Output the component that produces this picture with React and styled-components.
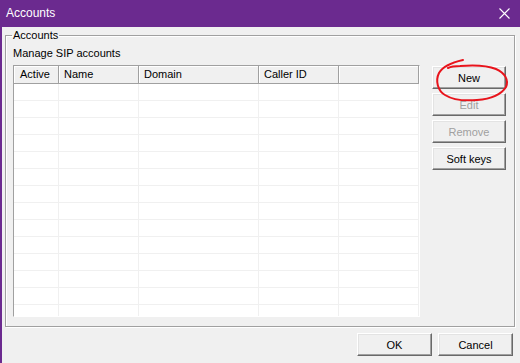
import React from "react";
import styled, { createGlobalStyle } from "styled-components";

const Global = createGlobalStyle`
  html, body { margin: 0; padding: 0; background: #f0f0f0; }
  body { font-family: "Liberation Sans", Arial, sans-serif; font-size: 11px; color: #000; }
`;

const Window = styled.div`
  width: 520px;
  height: 363px;
  box-sizing: border-box;
  border-left: 2px solid #6b2a8f;
  background: #f0f0f0;
  display: flex;
  flex-direction: column;
  overflow: hidden;
`;

const TitleBar = styled.div`
  height: 27px;
  flex: none;
  background: #6b2a8f;
  display: flex;
  align-items: center;
  justify-content: space-between;
  padding: 0 10px 0 4px;
  box-sizing: border-box;
`;

const Title = styled.span`
  color: #fff;
  font-size: 12px;
  line-height: 14px;
  padding-bottom: 1px;
`;

const CloseIcon = styled.svg`
  width: 11px;
  height: 11px;
  display: block;
`;

const Body = styled.div`
  flex: 1;
  display: flex;
  flex-direction: column;
  padding: 2px 5px 7px 3px;
  box-sizing: border-box;
`;

const GroupBox = styled.fieldset`
  margin: 0;
  flex: 1;
  min-width: 0;
  border: 1px solid #a0a0a0;
  box-shadow: inset 1px 1px 0 #fff, 1px 1px 0 #fff;
  padding: 5px 8px 7px 7px;
  display: flex;
  flex-direction: column;
`;

const Legend = styled.legend`
  padding: 0 1px;
  margin-left: -1px;
  line-height: 13px;
  font-size: 11px;
`;

const Description = styled.div`
  line-height: 13px;
  margin-bottom: 5px;
`;

const Row = styled.div`
  display: flex;
  gap: 12px;
  align-items: flex-start;
`;

const List = styled.div`
  width: 407px;
  height: 252px;
  box-sizing: border-box;
  background: #fff;
  border-top: 1px solid #a0a0a0;
  border-left: 1px solid #a0a0a0;
  border-right: 1px solid #fff;
  border-bottom: 1px solid #fff;
  overflow: hidden;
  display: grid;
  grid-template-columns: 45px 80px 120px 80px 80px;
  grid-auto-rows: 17px;
  grid-template-rows: 18px;
  align-content: start;
`;

const HeaderCell = styled.div`
  background: #f0f0f0;
  box-shadow: inset 1px 1px 0 #fff;
  border-right: 1px solid #a0a0a0;
  border-bottom: 1px solid #a0a0a0;
  box-sizing: border-box;
  padding-left: ${(p) => (p.$first ? 6 : 5)}px;
  line-height: 17px;
  white-space: nowrap;
  overflow: hidden;
`;

const Cell = styled.div`
  border-right: 1px solid #f0f0f0;
  border-bottom: 1px solid #f0f0f0;
  box-sizing: border-box;
`;

const ButtonColumn = styled.div`
  position: relative;
  display: flex;
  flex-direction: column;
  gap: 4px;
  margin-top: 1px;
`;

const Button = styled.button`
  width: ${(p) => p.$w || 74}px;
  height: 23px;
  box-sizing: border-box;
  margin: 0;
  padding: 0;
  font-family: "Liberation Sans", Arial, sans-serif;
  font-size: 11px;
  color: ${(p) => (p.disabled ? "#a0a0a0" : "#000")};
  background: #f0f0f0;
  border: 1px solid;
  border-color: #fff #696969 #696969 #fff;
  box-shadow: inset -1px -1px 0 #a0a0a0, inset 1px 1px 0 #e3e3e3;
`;

const Scribble = styled.svg`
  position: absolute;
  left: -2px;
  top: -9px;
  width: 80px;
  height: 46px;
  pointer-events: none;
  overflow: visible;
`;

const Footer = styled.div`
  display: flex;
  justify-content: flex-end;
  gap: 6px;
  margin-top: 6px;
  padding-right: 2px;
`;

const columns = ["Active", "Name", "Domain", "Caller ID", ""];
const ROWS = 14;

export default function App() {
  return (
    <>
      <Global />
      <Window>
        <TitleBar>
          <Title>Accounts</Title>
          <CloseIcon viewBox="0 0 11 11">
            <path d="M0.5 0.5 L10.5 10.5 M10.5 0.5 L0.5 10.5" stroke="#fff" strokeWidth="1.1" fill="none" />
          </CloseIcon>
        </TitleBar>
        <Body>
          <GroupBox>
            <Legend>Accounts</Legend>
            <Description>Manage SIP accounts</Description>
            <Row>
              <List>
                {columns.map((c, i) => (
                  <HeaderCell key={"h" + i} $first={i === 0}>{c}</HeaderCell>
                ))}
                {Array.from({ length: ROWS * columns.length }).map((_, i) => (
                  <Cell key={i} />
                ))}
              </List>
              <ButtonColumn>
                <Button>New</Button>
                <Button disabled>Edit</Button>
                <Button disabled>Remove</Button>
                <Button>Soft keys</Button>
                <Scribble viewBox="0 0 80 46">
                  <path
                    d="M33,3 C24,5 13,9 9,16 C5,24 8,34 15,38 C23,43 35,44 47,43 C60,42 71,38 76,30 C79,23 75,16 66,12 C56,8 42,8 30,9 C24,9 20,10 18,11"
                    stroke="#e8141c"
                    strokeWidth="2"
                    fill="none"
                    strokeLinecap="round"
                  />
                </Scribble>
              </ButtonColumn>
            </Row>
          </GroupBox>
          <Footer>
            <Button $w={75}>OK</Button>
            <Button $w={75}>Cancel</Button>
          </Footer>
        </Body>
      </Window>
    </>
  );
}
